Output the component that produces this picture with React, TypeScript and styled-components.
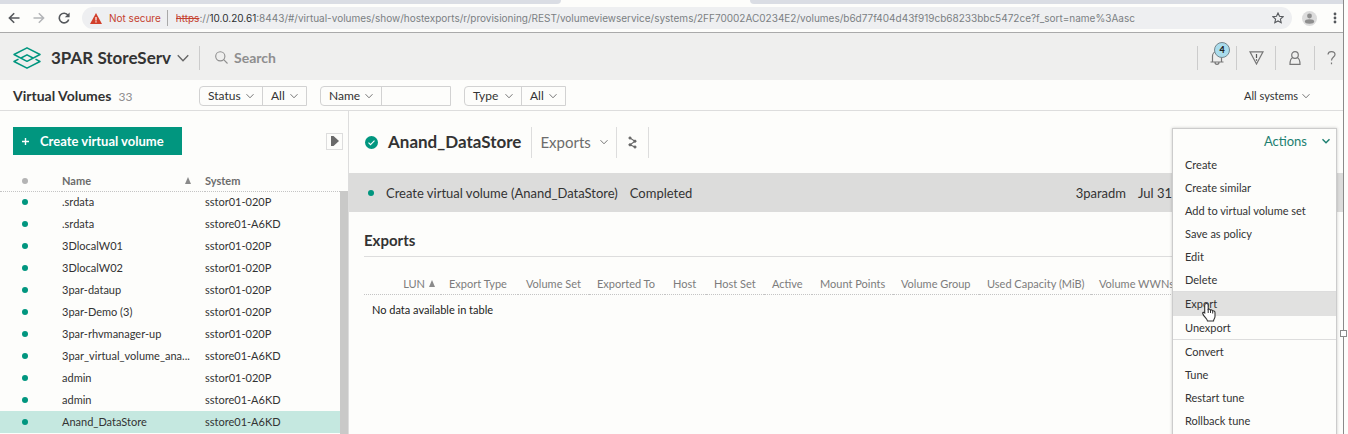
import React from "react";
import styled, { createGlobalStyle, css } from "styled-components";

const green = "#01967f";
const ui = `Lato, "Open Sans", sans-serif`;

const GlobalStyle = createGlobalStyle`
  *, *::before, *::after { box-sizing: border-box; }
  body { margin: 0; background: #fdfdfb; color: #333; font: 11px/16px ${ui}; overflow: hidden; }
  button, input { font: inherit; color: inherit; margin: 0; padding: 0; border: 0; background: none; border-radius: 0; }
  button { cursor: pointer; }
  svg { display: block; flex: none; }
  h1, h2 { margin: 0; }
`;

const Desktop = styled.div`
  position: relative;
  height: 100vh;
  padding-right: 4px;
`;
const BrowserWindow = styled.div`
  height: 100%;
  display: flex;
  flex-direction: column;
  border-right: 1px solid #8a8a8a;
  overflow: hidden;
`;
const ResizeHandle = styled.span`
  position: absolute;
  right: 1px;
  top: 330px;
  width: 7px;
  height: 7px;
  border: 1px solid #8a8a8a;
  background: #fff;
`;

const TabStrip = styled.div`
  display: flex;
  height: 4px;
  flex: none;
`;
const TabsBefore = styled.div`
  width: 561px;
  background: #dadde4;
  border-bottom-right-radius: 4px;
`;
const ActiveTab = styled.div`
  width: 189px;
`;
const TabsAfter = styled.div`
  flex: 1;
  background: #dadde4;
  border-bottom-left-radius: 4px;
`;
const AddressRow = styled.div`
  display: flex;
  align-items: center;
  flex: none;
  height: 29px;
  padding-left: 8px;
  border-bottom: 1px solid #aaa;
`;
const NavButtons = styled.div`
  display: flex;
  gap: 13px;
  width: 74px;
`;
const IconButton = styled.button`
  display: flex;
  align-items: center;
  justify-content: center;
`;
const AddressBar = styled.div`
  flex: 1;
  min-width: 0;
  height: 22px;
  display: flex;
  align-items: center;
  border-radius: 11px;
  background: #eeeff1;
  padding: 0 8px;
  font: 10px/16px Inter, sans-serif;
  color: #7b7f83;
  white-space: nowrap;
`;
const NotSecure = styled.span`
  color: #c5412f;
  margin-left: 7px;
  padding-right: 6px;
  margin-right: 8px;
  border-right: 1px solid #a9a9a9;
`;
const Url = styled.span`
  flex: 1;
  overflow: hidden;
  s { color: #c5412f; }
  b { font-weight: 400; color: #2d2f31; }
`;
const BrowserActions = styled.div`
  display: flex;
  align-items: center;
  gap: 16px;
  padding: 0 6px 0 10px;
`;

const Header = styled.header`
  display: flex;
  align-items: center;
  flex: none;
  height: 47px;
  padding: 2px 4px 0 13px;
  background: #efefee;
`;
const Product = styled.button`
  display: flex;
  align-items: center;
  gap: 6px;
  padding-right: 10px;
  font-size: 17px;
  line-height: 24px;
  font-weight: 700;
  border-right: 1px solid #ccc;
  svg:first-child { margin-right: 4px; }
`;
const SearchBox = styled.label`
  flex: 1;
  display: flex;
  align-items: center;
  gap: 6px;
  padding-left: 15px;
`;
const SearchInput = styled.input`
  flex: 1;
  font-size: 14px;
  line-height: 20px;
  &::placeholder { color: #8e8e8e; font-weight: 700; opacity: 1; }
`;
const HeaderAction = styled.button`
  position: relative;
  width: 39px;
  height: 24px;
  display: flex;
  align-items: center;
  justify-content: center;
  border-left: 1px solid #ccc;
`;
const HelpAction = styled(HeaderAction)`
  width: 25px;
  padding-left: 8px;
`;
const Badge = styled.span`
  position: absolute;
  left: 16px;
  top: -4px;
  width: 16px;
  height: 16px;
  border: 1px solid #75858c;
  border-radius: 50%;
  background: #a9dcec;
  font-size: 9px;
  line-height: 14px;
  font-weight: 900;
  color: #222;
`;

const FilterBar = styled.div`
  display: flex;
  align-items: center;
  flex: none;
  height: 31px;
  padding: 2px 0 0 13px;
  border-bottom: 1px solid #ddd;
`;
const PageTitle = styled.h1`
  width: 186px;
  font-size: 14px;
  line-height: 20px;
  font-weight: 700;
  small { margin-left: 7px; font-size: 12px; font-weight: 400; color: #8e8e8e; }
`;
const FilterGroup = styled.div`
  display: flex;
  height: 20px;
  margin-right: 13px;
  border: 1px solid #d2d2d2;
  border-radius: 4px 0 0 4px;
  font-size: 12px;
`;
const FilterButton = styled.button<{ $w: number }>`
  display: flex;
  align-items: center;
  justify-content: space-between;
  width: ${(p) => p.$w}px;
  padding: 0 8px;
  & + & { border-left: 1px solid #d2d2d2; }
`;
const FilterInput = styled.input`
  width: 69px;
  border-left: 1px solid #d2d2d2;
`;
const Systems = styled.button`
  display: flex;
  align-items: center;
  gap: 4px;
  margin-left: auto;
  margin-right: 33px;
`;

const Body = styled.div`
  flex: 1;
  min-height: 0;
  display: flex;
`;
const Sidebar = styled.aside`
  width: 349px;
  flex: none;
  border-right: 1px solid #ddd;
  display: flex;
  flex-direction: column;
`;
const SidebarTop = styled.div`
  display: flex;
  align-items: center;
  justify-content: space-between;
  padding: 16px 5px 16px 13px;
`;
const CreateButton = styled.button`
  display: flex;
  align-items: center;
  gap: 11px;
  height: 28px;
  padding: 0 18px 0 9px;
  background: ${green};
  color: #fff;
  font-size: 13px;
  font-weight: 700;
`;
const ExpandButton = styled(IconButton)`
  width: 17px;
  height: 17px;
  border: 1px solid #ddd;
`;
const ListArea = styled.div`
  flex: 1;
  min-height: 0;
  display: flex;
  align-items: stretch;
`;
const VolumeTable = styled.table`
  flex: 1;
  height: 0;
  border-collapse: collapse;
  table-layout: fixed;
  th, td { padding: 0; text-align: left; white-space: nowrap; }
  th { height: 20px; font-weight: 700; color: #6c6c6c; border-bottom: 1px dotted #c4c4c4; }
`;
const VolumeRow = styled.tr<{ $selected?: boolean }>`
  height: 22px;
  ${(p) => p.$selected && css`background: #c5e8e0;`}
`;
const SortHead = styled.span`
  display: flex;
  align-items: center;
  justify-content: space-between;
  padding-right: 14px;
`;
const Dot = styled.span<{ $color?: string; $left?: number }>`
  display: block;
  width: 6px;
  height: 6px;
  flex: none;
  margin-left: ${(p) => p.$left ?? 22}px;
  border-radius: 50%;
  background: ${(p) => p.$color ?? green};
`;
const ScrollThumb = styled.div`
  width: 8px;
  margin-top: 20px;
  background: #c9c9c8;
`;

const Main = styled.main`
  position: relative;
  flex: 1;
  min-width: 0;
`;
const TitleRow = styled.div`
  display: flex;
  align-items: center;
  height: 62px;
  padding-left: 16px;
`;
const DetailTitle = styled.h1`
  margin: 0 10px;
  font-size: 17px;
  line-height: 24px;
  font-weight: 700;
`;
const TitleControl = styled.button`
  display: flex;
  align-items: center;
  gap: 9px;
  height: 31px;
  padding: 0 8px;
  border-left: 1px solid #ddd;
  font-size: 15px;
  color: #6c6c6c;
`;
const ShareControl = styled(TitleControl)`
  width: 33px;
  padding: 0 11px;
  border-right: 1px solid #ddd;
`;
const TaskBar = styled.div`
  display: flex;
  align-items: center;
  height: 39px;
  padding-right: 168px;
  background: #dcdcdb;
  font-size: 13px;
  white-space: nowrap;
`;
const TaskText = styled.span`
  margin-left: 12px;
`;
const TaskMeta = styled.span`
  margin-left: auto;
  display: flex;
  gap: 12px;
`;
const Section = styled.section`
  padding: 18px 16px 0 15px;
`;
const SectionTitle = styled.h2`
  padding-bottom: 6px;
  border-bottom: 1px solid #ddd;
  font-size: 15px;
  line-height: 20px;
  font-weight: 700;
`;
const ExportTable = styled.table`
  width: 100%;
  margin-top: 17px;
  border-collapse: collapse;
  table-layout: fixed;
  th, td { padding: 0 0 0 8px; text-align: left; white-space: nowrap; font-weight: 400; }
  th { height: 20px; color: #7c7c7c; border-bottom: 1px dotted #c4c4c4; }
  td { height: 32px; color: #222; }
`;
const LunHead = styled.span`
  display: flex;
  align-items: center;
  justify-content: flex-end;
  gap: 4px;
  padding-right: 6px;
`;

const Menu = styled.div`
  position: absolute;
  top: 17px;
  right: 6px;
  width: 165px;
  height: 340px;
  border: 1px solid #ccc;
  background: #fdfdfb;
  box-shadow: 0 0 3px rgba(0, 0, 0, 0.2);
`;
const MenuToggle = styled.button`
  display: flex;
  align-items: center;
  justify-content: flex-end;
  gap: 15px;
  width: 100%;
  height: 24px;
  padding-right: 6px;
  font-size: 13px;
  color: #1c7f70;
`;
const MenuGroup = styled.div`
  & + & { border-top: 1px solid #ddd; }
`;
const MenuItem = styled.button<{ $hover?: boolean }>`
  display: block;
  width: 100%;
  height: 23px;
  padding-left: 12px;
  text-align: left;
  ${(p) => p.$hover && css`height: 24px; background: #e1e1e0;`}
`;
const Pointer = styled.svg`
  position: absolute;
  left: 28px;
  top: 173px;
`;

const Chevron = ({ w = 8, color = "#777", sw = 1 }: { w?: number; color?: string; sw?: number }) => (
  <svg width={w} height={w} viewBox="0 0 8 8" fill="none" stroke={color} strokeWidth={(sw * 8) / w}>
    <path d="M.5 2.2 4 5.8 7.5 2.2" />
  </svg>
);
const Triangle = () => (
  <svg width="6" height="7" viewBox="0 0 6 7"><path d="M3 0 6 7H0z" fill="#8a8a8a" /></svg>
);

const volumes = [
  [".srdata", "sstor01-020P"],
  [".srdata", "sstore01-A6KD"],
  ["3DlocalW01", "sstor01-020P"],
  ["3DlocalW02", "sstor01-020P"],
  ["3par-dataup", "sstor01-020P"],
  ["3par-Demo (3)", "sstor01-020P"],
  ["3par-rhvmanager-up", "sstor01-020P"],
  ["3par_virtual_volume_ana...", "sstore01-A6KD"],
  ["admin", "sstor01-020P"],
  ["admin", "sstore01-A6KD"],
  ["Anand_DataStore", "sstore01-A6KD"],
];
const exportColumns: [string, number][] = [
  ["Export Type", 77], ["Volume Set", 71], ["Exported To", 76], ["Host", 41], ["Host Set", 58],
  ["Active", 48], ["Mount Points", 81], ["Volume Group", 86], ["Used Capacity (MiB)", 112],
];
const actions = [
  ["Create", "Create similar", "Add to virtual volume set", "Save as policy", "Edit", "Delete"],
  ["Export", "Unexport"],
  ["Convert", "Tune", "Restart tune", "Rollback tune"],
];

export default function App() {
  return (
    <Desktop>
      <GlobalStyle />
      <BrowserWindow>
        <TabStrip><TabsBefore /><ActiveTab /><TabsAfter /></TabStrip>
        <AddressRow>
          <NavButtons>
            <IconButton aria-label="Back">
              <svg width="12" height="12" viewBox="0 0 12 12" fill="none" stroke="#55585c" strokeWidth="1.6"><path d="M11.5 6H1.5M6.2 1.2 1.4 6l4.8 4.8" /></svg>
            </IconButton>
            <IconButton aria-label="Forward">
              <svg width="12" height="12" viewBox="0 0 12 12" fill="none" stroke="#b3b5b8" strokeWidth="1.5"><path d="M.5 6h10M5.8 1.2 10.6 6l-4.8 4.8" /></svg>
            </IconButton>
            <IconButton aria-label="Reload">
              <svg width="12" height="12" viewBox="0 0 12 12" fill="none" stroke="#55585c" strokeWidth="1.6"><path d="M10 3.2A4.8 4.8 0 1 0 10.7 7.4" /><path d="M11.6.4v4.8H6.8z" fill="#55585c" stroke="none" /></svg>
            </IconButton>
          </NavButtons>
          <AddressBar>
            <svg width="12" height="11" viewBox="0 0 12 11"><path d="M6 0l6 11H0z" fill="#d23f2b" /><path d="M6 4v3.4M6 8.3v1.3" stroke="#fff" strokeWidth="1.2" /></svg>
            <NotSecure>Not secure</NotSecure>
            <Url><s>https</s>://<b>10.0.20.61</b>:8443/#/virtual-volumes/show/hostexports/r/provisioning/REST/volumeviewservice/systems/2FF70002AC0234E2/volumes/b6d77f404d43f919cb68233bbc5472ce?f_sort=name%3Aasc</Url>
            <IconButton aria-label="Bookmark">
              <svg width="12" height="12" viewBox="0 0 12 12" fill="none" stroke="#55585c" strokeWidth="1.1"><path d="M6 1l1.5 3.3 3.6.4-2.7 2.4.8 3.6L6 8.9l-3.2 1.8.8-3.6L.9 4.7l3.6-.4z" /></svg>
            </IconButton>
          </AddressBar>
          <BrowserActions>
            <IconButton aria-label="Profile">
              <svg width="15" height="15" viewBox="0 0 15 15"><circle cx="7.5" cy="7.5" r="7.5" fill="#dcdcdc" /><circle cx="7.5" cy="5" r="2.4" fill="#8e8e8e" /><ellipse cx="7.5" cy="10.5" rx="4.6" ry="2.2" fill="#8e8e8e" /></svg>
            </IconButton>
            <IconButton aria-label="Menu">
              <svg width="4" height="12" viewBox="0 0 4 12" fill="#55585c"><circle cx="2" cy="2" r="1.4" /><circle cx="2" cy="6" r="1.4" /><circle cx="2" cy="10" r="1.4" /></svg>
            </IconButton>
          </BrowserActions>
        </AddressRow>

        <Header>
          <Product>
            <svg width="28" height="22" viewBox="0 0 28 22" fill="none" stroke={green} strokeWidth="1.5" strokeLinejoin="round">
              <path d="M14 .8 27 7.500 14 14.300 1 7.500z" />
              <path d="M5.500 12.200 1 14.500 14 21.200 27 14.500 22.500 12.200M8 11 14 7.800 20 11" />
            </svg>
            3PAR StoreServ
            <Chevron w={12} color="#666" sw={1.4} />
          </Product>
          <SearchBox>
            <svg width="13" height="13" viewBox="0 0 13 13" fill="none" stroke="#8e8e8e" strokeWidth="1.1"><circle cx="5.3" cy="5.3" r="4.6" /><path d="M8.7 8.7 12.5 12.5" /></svg>
            <SearchInput placeholder="Search" aria-label="Search" />
          </SearchBox>
          <HeaderAction aria-label="Notifications">
            <svg width="14" height="15" viewBox="0 0 14 15" fill="none" stroke="#777" strokeWidth="1.2"><path d="M.5 12h13M2.5 12V6a4.5 4.5 0 0 1 9 0v6M5 12.3a2 2 0 0 0 4 0" /></svg>
            <Badge>4</Badge>
          </HeaderAction>
          <HeaderAction aria-label="Alerts">
            <svg width="15" height="14" viewBox="0 0 15 14" fill="none" stroke="#777" strokeWidth="1.2"><path d="M1 .8h13L7.5 13z" /><path d="M7.5 3v4M7.5 8.2v1.6" stroke="#555" /></svg>
          </HeaderAction>
          <HeaderAction aria-label="User">
            <svg width="12" height="14" viewBox="0 0 12 14" fill="none" stroke="#777" strokeWidth="1.2"><circle cx="6" cy="4" r="3.3" /><path d="M3.800 6.500C1.500 7.500 1 9 1 13.300h10c0-4.300-.5-5.800-2.800-6.800" /></svg>
          </HeaderAction>
          <HelpAction aria-label="Help">
            <svg width="9" height="14" viewBox="0 0 9 14" fill="none" stroke="#777" strokeWidth="1.2"><path d="M1 3.500C1.200 1.600 2.500.700 4.500.700 6.600.700 8 1.800 8 3.600 8 6 4.500 6.200 4.500 9.500M4.500 11.500v1.700" /></svg>
          </HelpAction>
        </Header>

        <FilterBar>
          <PageTitle>Virtual Volumes<small>33</small></PageTitle>
          <FilterGroup>
            <FilterButton $w={62}>Status<Chevron /></FilterButton>
            <FilterButton $w={44}>All<Chevron /></FilterButton>
          </FilterGroup>
          <FilterGroup>
            <FilterButton $w={60}>Name<Chevron /></FilterButton>
            <FilterInput aria-label="Name filter" />
          </FilterGroup>
          <FilterGroup>
            <FilterButton $w={56}>Type<Chevron /></FilterButton>
            <FilterButton $w={44}>All<Chevron /></FilterButton>
          </FilterGroup>
          <Systems>All systems<Chevron /></Systems>
        </FilterBar>

        <Body>
          <Sidebar>
            <SidebarTop>
              <CreateButton>
                <svg width="7" height="7" viewBox="0 0 7 7" stroke="#fff" strokeWidth="1.400"><path d="M3.500 0v7M0 3.500h7" /></svg>
                Create virtual volume
              </CreateButton>
              <ExpandButton aria-label="Expand list">
                <svg width="8" height="10" viewBox="0 0 8 10"><path d="M0 0h2.500L8 5 2.500 10H0z" fill="#6a6a6a" /></svg>
              </ExpandButton>
            </SidebarTop>
            <ListArea>
              <VolumeTable>
                <colgroup><col style={{ width: 62 }} /><col style={{ width: 143 }} /><col /></colgroup>
                <thead>
                  <tr>
                    <th aria-label="Status"><Dot $color="#b4b4b4" /></th>
                    <th><SortHead>Name<Triangle /></SortHead></th>
                    <th>System</th>
                  </tr>
                </thead>
                <tbody>
                  {volumes.map(([name, system], i) => (
                    <VolumeRow key={i} $selected={i === 10}>
                      <td><Dot /></td>
                      <td>{name}</td>
                      <td>{system}</td>
                    </VolumeRow>
                  ))}
                </tbody>
              </VolumeTable>
              <ScrollThumb />
            </ListArea>
          </Sidebar>

          <Main>
            <TitleRow>
              <svg width="13" height="13" viewBox="0 0 13 13"><circle cx="6.500" cy="6.500" r="6.500" fill={green} /><path d="M3.500 6.700l2 2 4-4" fill="none" stroke="#fff" strokeWidth="1.100" /></svg>
              <DetailTitle>Anand_DataStore</DetailTitle>
              <TitleControl>Exports<Chevron /></TitleControl>
              <ShareControl aria-label="Relationships">
                <svg width="9" height="13" viewBox="0 0 9 13" fill="#666" stroke="#666"><path d="M2 2 7 5.200 2 8.800 7 11" fill="none" strokeWidth="1.100" /><circle cx="2" cy="2" r="1.100" /><circle cx="7" cy="5.200" r="1.100" /><circle cx="2" cy="8.800" r="1.100" /><circle cx="7" cy="11" r="1.100" /></svg>
              </ShareControl>
            </TitleRow>
            <TaskBar>
              <Dot $left={19} />
              <TaskText>Create virtual volume (Anand_DataStore)</TaskText>
              <TaskText>Completed</TaskText>
              <TaskMeta><span>3paradm</span><span>Jul 31,</span></TaskMeta>
            </TaskBar>
            <Section>
              <SectionTitle>Exports</SectionTitle>
              <ExportTable>
                <colgroup>
                  <col style={{ width: 77 }} />
                  {exportColumns.map(([label, width]) => <col key={label} style={{ width }} />)}
                  <col />
                </colgroup>
                <thead>
                  <tr>
                    <th><LunHead>LUN<Triangle /></LunHead></th>
                    {exportColumns.map(([label]) => <th key={label}>{label}</th>)}
                    <th>Volume WWNs</th>
                  </tr>
                </thead>
                <tbody><tr><td colSpan={11}>No data available in table</td></tr></tbody>
              </ExportTable>
            </Section>
            <Menu>
              <MenuToggle>Actions<Chevron sw={1.400} color="#1c7f70" /></MenuToggle>
              {actions.map((group) => (
                <MenuGroup key={group[0]}>
                  {group.map((label) => <MenuItem key={label} $hover={label === "Export"}>{label}</MenuItem>)}
                </MenuGroup>
              ))}
              <Pointer width="18" height="21" viewBox="0 0 18 21">
                <path d="M5.500 1.500c1.300 0 1.700.800 1.700 1.800v4c1-.5 2 0 2.200.7 1-.4 2 0 2.200.8 1.500-.2 2.400.5 2.400 2v3.700c0 2-1.500 3-1.500 4.500H6.500c0-2-4-4.500-4.800-7.500-.2-1.200 1-1.600 2-.6V3.300c0-1 .6-1.800 1.800-1.800z" fill="#fff" stroke="#333" strokeWidth="1.100" />
                <path d="M7.200 7v4M9.500 8v3M11.700 9v2.500" stroke="#333" />
              </Pointer>
            </Menu>
          </Main>
        </Body>
      </BrowserWindow>
      <ResizeHandle />
    </Desktop>
  );
}
